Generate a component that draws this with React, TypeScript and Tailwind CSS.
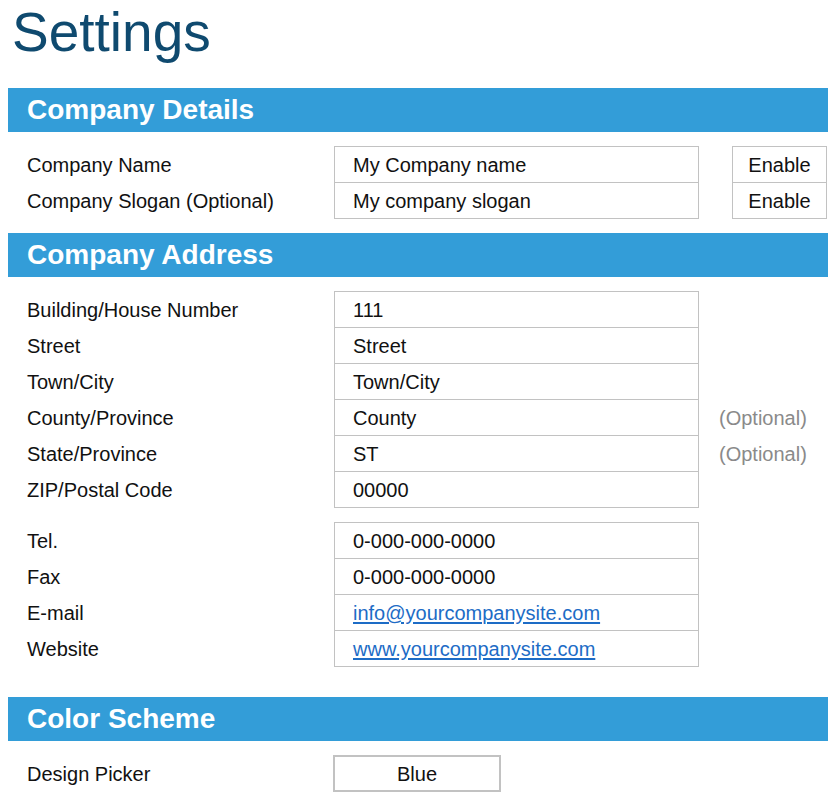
import React from "react";

function Band({ title }: { title: string }) {
  return (
    <div className="h-[44px] bg-[#339dd8] pl-[19px] flex items-center text-white font-bold text-[28px] leading-none">
      {title}
    </div>
  );
}

function Cell({ children, first, className = "" }: { children: React.ReactNode; first?: boolean; className?: string }) {
  return (
    <div className={`h-[37px] border border-[#c2c2c2] flex items-center ${first ? "" : "-mt-px"} ${className}`}>
      {children}
    </div>
  );
}

function Row({
  label,
  value,
  first,
  extra,
  link,
}: {
  label: string;
  value: string;
  first?: boolean;
  extra?: React.ReactNode;
  link?: boolean;
}) {
  return (
    <div className={`flex items-center ${first ? "" : "-mt-px"}`}>
      <div className="w-[326px] pl-[19px] shrink-0">{label}</div>
      <Cell first className="w-[365px] pl-[18px] shrink-0">
        {link ? <span className="text-[#1d6cc6] underline underline-offset-2">{value}</span> : value}
      </Cell>
      {extra}
    </div>
  );
}

function EnableBox() {
  return (
    <div className="ml-[33px] w-[95px] h-[37px] border border-[#c2c2c2] flex items-center justify-center shrink-0">
      Enable
    </div>
  );
}

const Optional = () => <div className="ml-[20px] text-[#8a8a8a]">(Optional)</div>;

export default function App() {
  return (
    <div className="w-[836px] h-[801px] overflow-hidden bg-white px-2 text-[20px] leading-none text-[#111] font-['Liberation_Sans',Arial,sans-serif]">
      <div className="h-[88px]">
        <h1 className="pl-[4px] text-[55px] leading-[64px] text-[#0f4a6f] font-normal">Settings</h1>
      </div>

      <Band title="Company Details" />
      <div className="pt-[14px] pb-[14px]">
        <Row label="Company Name" value="My Company name" first extra={<EnableBox />} />
        <Row label="Company Slogan (Optional)" value="My company slogan" extra={<EnableBox />} />
      </div>

      <Band title="Company Address" />
      <div className="pt-[14px] pb-[30px]">
        <Row label="Building/House Number" value="111" first />
        <Row label="Street" value="Street" />
        <Row label="Town/City" value="Town/City" />
        <Row label="County/Province" value="County" extra={<Optional />} />
        <Row label="State/Province" value="ST" extra={<Optional />} />
        <Row label="ZIP/Postal Code" value="00000" />
        <div className="h-[14px]" />
        <Row label="Tel." value="0-000-000-0000" first />
        <Row label="Fax" value="0-000-000-0000" />
        <Row label="E-mail" value="info@yourcompanysite.com" link />
        <Row label="Website" value="www.yourcompanysite.com" link />
      </div>

      <Band title="Color Scheme" />
      <div className="pt-[14px] flex items-center">
        <div className="w-[325px] pl-[19px] shrink-0">Design Picker</div>
        <div className="w-[168px] h-[37px] border-2 border-[#c2c2c2] flex items-center justify-center">Blue</div>
      </div>
    </div>
  );
}
